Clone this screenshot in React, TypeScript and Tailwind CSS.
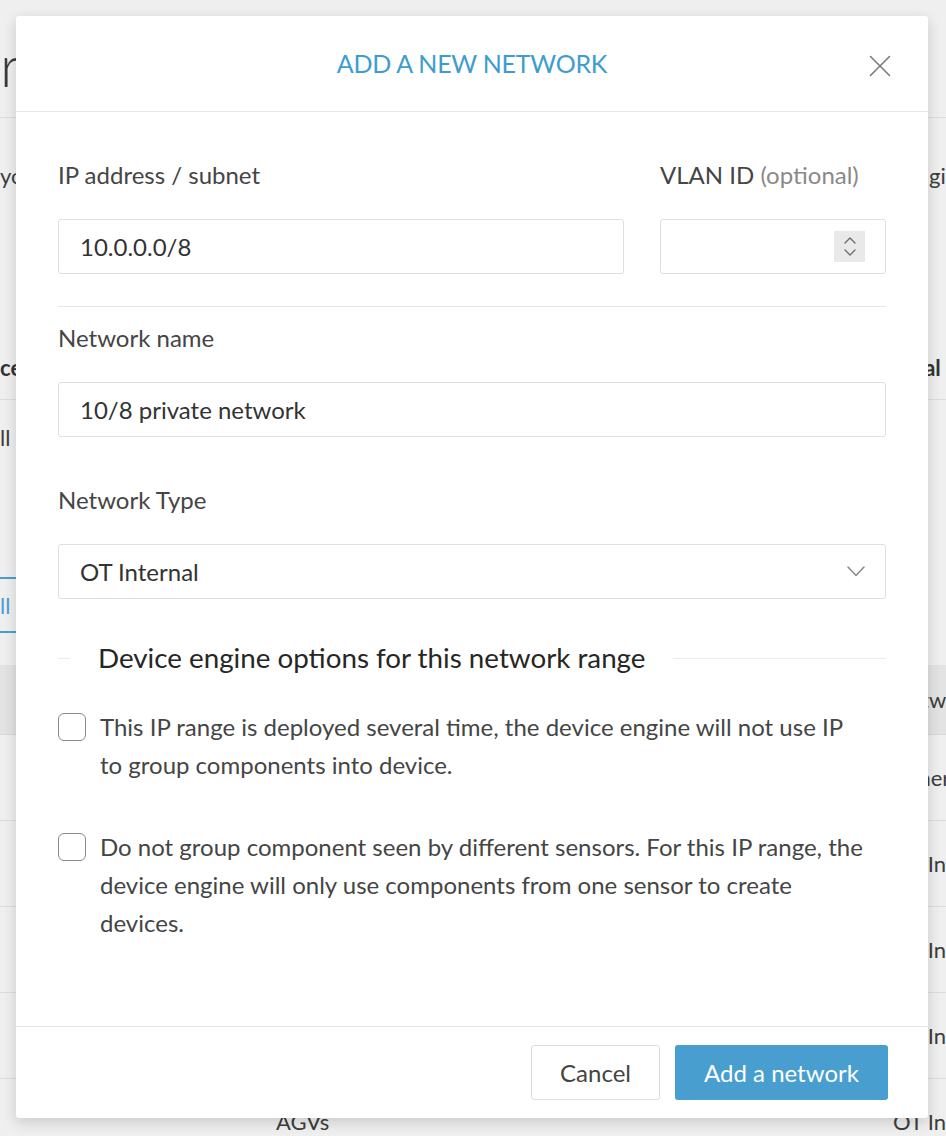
import React from "react";

function CloseIcon() {
  return (
    <svg width="22" height="22" viewBox="0 0 22 22" fill="none">
      <path d="M1.5 1.5 L20.5 20.5 M20.5 1.5 L1.5 20.5" stroke="#7a7a7a" strokeWidth="1.6" strokeLinecap="round" />
    </svg>
  );
}

function SpinnerIcon() {
  return (
    <div className="w-[31px] h-[31px] bg-[#e9e9e9] flex flex-col items-center justify-center gap-[5px]">
      <svg width="12" height="7" viewBox="0 0 12 7" fill="none">
        <path d="M1 6 L6 1 L11 6" stroke="#6f6f6f" strokeWidth="1.4" strokeLinecap="round" strokeLinejoin="round" />
      </svg>
      <svg width="12" height="7" viewBox="0 0 12 7" fill="none">
        <path d="M1 1 L6 6 L11 1" stroke="#6f6f6f" strokeWidth="1.4" strokeLinecap="round" strokeLinejoin="round" />
      </svg>
    </div>
  );
}

function ChevronDown() {
  return (
    <svg width="18" height="11" viewBox="0 0 18 11" fill="none">
      <path d="M1 1 L9 9.5 L17 1" stroke="#888" strokeWidth="1.5" strokeLinecap="round" strokeLinejoin="round" />
    </svg>
  );
}

function Checkbox() {
  return <div className="mt-[5px] w-[28px] h-[28px] shrink-0 rounded-[6px] border-[1.5px] border-[#8c8c8c] bg-white" />;
}

// page behind the dialog, mostly covered
function BackgroundPage() {
  return (
    <div className="flex flex-col text-[22px] text-[#3c3c3c]">
      <div className="h-[118px] pt-[12px] flex items-center border-b border-[#dcdcdc]">
        <span className="text-[58px] font-light leading-none text-[#3a3a3a]">r</span>
      </div>
      <div className="h-[114px] grid grid-cols-[276px_1fr_53px] items-center">
        <span>you</span>
        <span />
        <span className="pl-[36px] whitespace-nowrap overflow-hidden">give</span>
      </div>
      <div className="h-[104px]" />
      <div className="h-[64px] grid grid-cols-[276px_1fr_53px] items-center border-b border-[#dcdcdc] font-bold text-[#333]">
        <span>cess</span>
        <span />
        <span className="whitespace-nowrap overflow-hidden">Total</span>
      </div>
      <div className="h-[74px] flex items-center">
        <span>ll</span>
      </div>
      <div className="h-[103px]" />
      <div className="h-[56px] w-[60px] flex items-center border-y-2 border-[#4a9fd0] text-[#4a9fd0]">
        <span>ll</span>
      </div>
      <div className="h-[32px]" />
      <div className="h-[70px] grid grid-cols-[276px_1fr_53px] items-center bg-[#e3e3e3] border-b border-[#d8d8d8]">
        <span />
        <span />
        <span className="whitespace-nowrap overflow-hidden">Network</span>
      </div>
      {["Other", "OT Internal", "OT Internal", "OT Internal", "OT Internal"].map((t, i) => (
        <div key={i} className="h-[86px] grid grid-cols-[276px_1fr_53px] items-center border-b border-[#dcdcdc]">
          <span />
          <span>{i === 4 ? "AGVs" : ""}</span>
          <span className="whitespace-nowrap overflow-hidden">{t}</span>
        </div>
      ))}
    </div>
  );
}

export default function App() {
  return (
    <div className="relative w-[946px] h-[1136px] overflow-hidden bg-[#efefef] font-['Lato',sans-serif]">
      <BackgroundPage />

      <div className="absolute left-[16px] top-[16px] w-[912px] h-[1102px] bg-white rounded-[3px] shadow-[0_4px_14px_rgba(0,0,0,0.16)] flex flex-col">
        <div className="h-[96px] shrink-0 border-b border-[#e8e8e8] flex items-center justify-center relative">
          <h2 className="text-[25px] text-[#3d9dd1] tracking-[-0.01em] leading-none">ADD A NEW NETWORK</h2>
          <button className="absolute right-[37px] top-[39px]">
            <CloseIcon />
          </button>
        </div>

        <div className="flex-1 px-[42px] pt-[48px] text-[24px] text-[#454545]">
          <div className="grid grid-cols-[1fr_226px] gap-x-[36px]">
            <label className="leading-[30px]">IP address / subnet</label>
            <label className="leading-[30px] whitespace-nowrap">
              VLAN ID <span className="text-[#8a8a8a]">(optional)</span>
            </label>
            <div className="mt-[29px] h-[55px] border border-[#dfdfdf] rounded-[3px] flex items-center px-[21px] text-[#333]">
              10.0.0.0/8
            </div>
            <div className="mt-[29px] h-[55px] border border-[#dfdfdf] rounded-[3px] flex items-center justify-end pr-[20px]">
              <SpinnerIcon />
            </div>
          </div>

          <div className="mt-[32px] border-t border-[#e8e8e8]" />

          <label className="block mt-[16px] leading-[30px]">Network name</label>
          <div className="mt-[29px] h-[55px] border border-[#dfdfdf] rounded-[3px] flex items-center px-[21px] text-[#333]">
            10/8 private network
          </div>

          <label className="block mt-[48px] leading-[30px]">Network Type</label>
          <div className="mt-[29px] h-[55px] border border-[#dfdfdf] rounded-[3px] flex items-center justify-between pl-[21px] pr-[20px] text-[#333]">
            <span>OT Internal</span>
            <ChevronDown />
          </div>

          <div className="mt-[43px] flex items-center">
            <div className="w-[12px] border-t border-[#ededed]" />
            <span className="px-[28px] text-[27.75px] leading-[32px] text-[#262626]">
              Device engine options for this network range
            </span>
            <div className="flex-1 border-t border-[#ededed]" />
          </div>

          <div className="mt-[34px] flex items-start gap-[14px] leading-[38px]">
            <Checkbox />
            <p>
              This IP range is deployed several time, the device engine will not use IP
              <br />
              to group components into device.
            </p>
          </div>

          <div className="mt-[44px] flex items-start gap-[14px] leading-[38px]">
            <Checkbox />
            <p>
              Do not group component seen by different sensors. For this IP range, the
              <br />
              device engine will only use components from one sensor to create
              <br />
              devices.
            </p>
          </div>
        </div>

        <div className="h-[92px] shrink-0 border-t border-[#e8e8e8] flex items-center justify-end gap-[15px] pr-[40px] text-[24px]">
          <button className="w-[129px] h-[55px] border border-[#dedede] rounded-[3px] text-[#444] bg-white">
            Cancel
          </button>
          <button className="w-[213px] h-[55px] rounded-[3px] bg-[#489ecf] text-white">
            Add a network
          </button>
        </div>
      </div>
    </div>
  );
}
